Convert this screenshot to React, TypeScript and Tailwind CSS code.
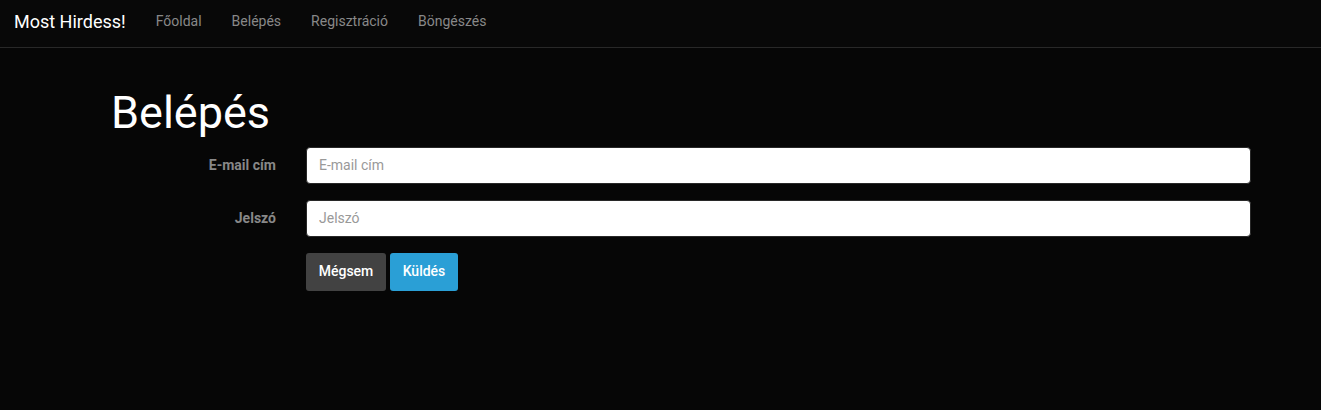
export default function App() {
  return (
    <div className="min-h-[410px] w-full bg-[#060606]" style={{ fontFamily: "Roboto, 'Liberation Sans', sans-serif" }}>
      <nav className="flex h-[48px] items-center border-b border-[#282828] bg-[#080808] pb-[4px]">
        <span className="pl-[14px] pr-[15px] text-[18px] text-white">Most Hirdess!</span>
        <div className="flex text-[14px] text-[#888888]">
          <a className="px-[15px]">Főoldal</a>
          <a className="px-[15px]">Belépés</a>
          <a className="px-[15px]">Regisztráció</a>
          <a className="px-[15px]">Böngészés</a>
        </div>
      </nav>
      <div className="ml-[81px] w-[1200px] px-[15px]">
        <h1 className="ml-[15px] mt-[40px] mb-[9px] text-[45px] font-normal leading-[1.1] text-white">Belépés</h1>
        <form className="flex flex-col gap-[16px]">
          <div className="flex items-center">
            <label className="w-[195px] px-[15px] text-right text-[14px] font-bold text-[#888888]">E-mail cím</label>
            <div className="flex-1 px-[15px]">
              <input className="h-[37px] w-full rounded-[4px] border border-[#282828] bg-white px-[12px] text-[14px] text-[#555] placeholder:text-[#999999] outline-none" placeholder="E-mail cím" />
            </div>
          </div>
          <div className="flex items-center">
            <label className="w-[195px] px-[15px] text-right text-[14px] font-bold text-[#888888]">Jelszó</label>
            <div className="flex-1 px-[15px]">
              <input type="password" className="h-[37px] w-full rounded-[4px] border border-[#282828] bg-white px-[12px] text-[14px] text-[#555] placeholder:text-[#999999] outline-none" placeholder="Jelszó" />
            </div>
          </div>
          <div className="flex">
            <div className="w-[195px]" />
            <div className="flex gap-[4px] px-[15px]">
              <button type="button" className="h-[38px] w-[80px] rounded-[3px] bg-[#424242] text-[14px] font-medium text-white">Mégsem</button>
              <button type="button" className="h-[38px] w-[68px] rounded-[3px] bg-[#2a9fd6] text-[14px] font-medium text-white">Küldés</button>
            </div>
          </div>
        </form>
      </div>
    </div>
  );
}
